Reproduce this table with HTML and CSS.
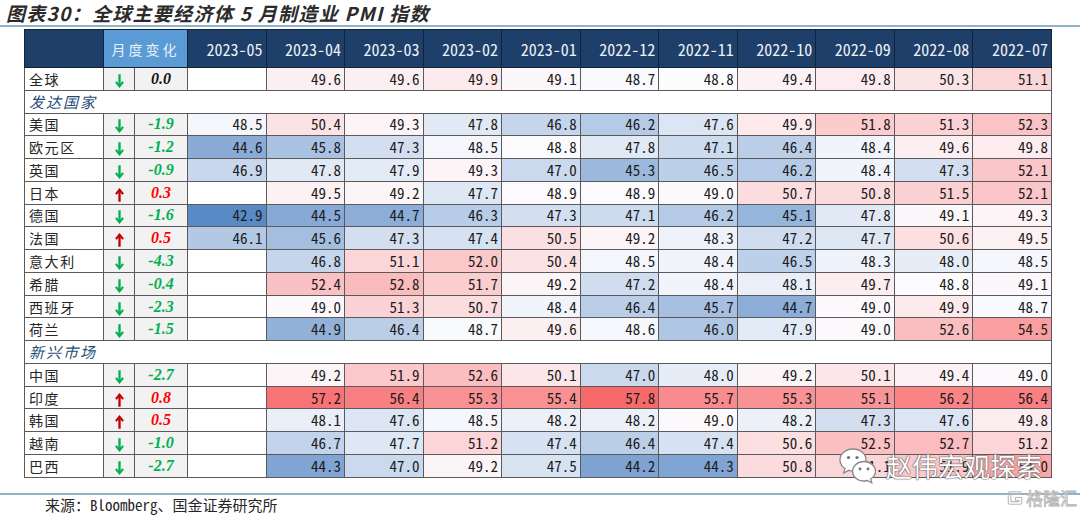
FILE: index.html
```html
<!DOCTYPE html>
<html lang="zh-CN">
<head>
<meta charset="utf-8">
<title>全球主要经济体5月制造业PMI指数</title>
<link rel="stylesheet" href="styles.css">
</head>
<body>
<svg class="defs" width="0" height="0" aria-hidden="true">
  <defs>
    <symbol id="dn" viewBox="0 0 10 15">
      <path d="M5 0 V13" stroke="currentColor" stroke-width="2.6" fill="none"/>
      <path d="M1 8.4 L5 13.4 L9 8.4" stroke="currentColor" stroke-width="2.4" fill="none" stroke-linejoin="miter"/>
    </symbol>
    <symbol id="up" viewBox="0 0 10 15">
      <path d="M5 15 V2" stroke="currentColor" stroke-width="2.6" fill="none"/>
      <path d="M1 6.6 L5 1.6 L9 6.6" stroke="currentColor" stroke-width="2.4" fill="none" stroke-linejoin="miter"/>
    </symbol>
  </defs>
</svg>
<div class="page">
  <h1 class="title">图表30：全球主要经济体 5 月制造业 PMI 指数</h1>
  <table class="pmi">
    <colgroup>
      <col class="c-name"><col class="c-arr"><col class="c-chg">
      <col span="11">
    </colgroup>
    <thead>
      <tr>
        <th class="h-blank"></th>
        <th class="h-chg" colspan="2">月度变化</th>
        <th>2023-05</th><th>2023-04</th><th>2023-03</th><th>2023-02</th><th>2023-01</th><th>2022-12</th><th>2022-11</th><th>2022-10</th><th>2022-09</th><th>2022-08</th><th>2022-07</th>
      </tr>
    </thead>
    <tbody>
      <tr><td class="name">全球</td><td class="arr dn"><svg><use href="#dn"/></svg></td><td class="chg zero">0.0</td>
        <td class="n"></td><td class="n">49.6</td><td class="n">49.6</td><td class="n">49.9</td><td class="n">49.1</td><td class="n">48.7</td><td class="n">48.8</td><td class="n">49.4</td><td class="n">49.8</td><td class="n">50.3</td><td class="n">51.1</td></tr>
      <tr class="sec"><td colspan="14">发达国家</td></tr>
      <tr><td class="name">美国</td><td class="arr dn"><svg><use href="#dn"/></svg></td><td class="chg neg">-1.9</td>
        <td class="n">48.5</td><td class="n">50.4</td><td class="n">49.3</td><td class="n">47.8</td><td class="n">46.8</td><td class="n">46.2</td><td class="n">47.6</td><td class="n">49.9</td><td class="n">51.8</td><td class="n">51.3</td><td class="n">52.3</td></tr>
      <tr><td class="name">欧元区</td><td class="arr dn"><svg><use href="#dn"/></svg></td><td class="chg neg">-1.2</td>
        <td class="n">44.6</td><td class="n">45.8</td><td class="n">47.3</td><td class="n">48.5</td><td class="n">48.8</td><td class="n">47.8</td><td class="n">47.1</td><td class="n">46.4</td><td class="n">48.4</td><td class="n">49.6</td><td class="n">49.8</td></tr>
      <tr><td class="name">英国</td><td class="arr dn"><svg><use href="#dn"/></svg></td><td class="chg neg">-0.9</td>
        <td class="n">46.9</td><td class="n">47.8</td><td class="n">47.9</td><td class="n">49.3</td><td class="n">47.0</td><td class="n">45.3</td><td class="n">46.5</td><td class="n">46.2</td><td class="n">48.4</td><td class="n">47.3</td><td class="n">52.1</td></tr>
      <tr><td class="name">日本</td><td class="arr upc"><svg><use href="#up"/></svg></td><td class="chg pos">0.3</td>
        <td class="n"></td><td class="n">49.5</td><td class="n">49.2</td><td class="n">47.7</td><td class="n">48.9</td><td class="n">48.9</td><td class="n">49.0</td><td class="n">50.7</td><td class="n">50.8</td><td class="n">51.5</td><td class="n">52.1</td></tr>
      <tr><td class="name">德国</td><td class="arr dn"><svg><use href="#dn"/></svg></td><td class="chg neg">-1.6</td>
        <td class="n">42.9</td><td class="n">44.5</td><td class="n">44.7</td><td class="n">46.3</td><td class="n">47.3</td><td class="n">47.1</td><td class="n">46.2</td><td class="n">45.1</td><td class="n">47.8</td><td class="n">49.1</td><td class="n">49.3</td></tr>
      <tr><td class="name">法国</td><td class="arr upc"><svg><use href="#up"/></svg></td><td class="chg pos">0.5</td>
        <td class="n">46.1</td><td class="n">45.6</td><td class="n">47.3</td><td class="n">47.4</td><td class="n">50.5</td><td class="n">49.2</td><td class="n">48.3</td><td class="n">47.2</td><td class="n">47.7</td><td class="n">50.6</td><td class="n">49.5</td></tr>
      <tr><td class="name">意大利</td><td class="arr dn"><svg><use href="#dn"/></svg></td><td class="chg neg">-4.3</td>
        <td class="n"></td><td class="n">46.8</td><td class="n">51.1</td><td class="n">52.0</td><td class="n">50.4</td><td class="n">48.5</td><td class="n">48.4</td><td class="n">46.5</td><td class="n">48.3</td><td class="n">48.0</td><td class="n">48.5</td></tr>
      <tr><td class="name">希腊</td><td class="arr dn"><svg><use href="#dn"/></svg></td><td class="chg neg">-0.4</td>
        <td class="n"></td><td class="n">52.4</td><td class="n">52.8</td><td class="n">51.7</td><td class="n">49.2</td><td class="n">47.2</td><td class="n">48.4</td><td class="n">48.1</td><td class="n">49.7</td><td class="n">48.8</td><td class="n">49.1</td></tr>
      <tr><td class="name">西班牙</td><td class="arr dn"><svg><use href="#dn"/></svg></td><td class="chg neg">-2.3</td>
        <td class="n"></td><td class="n">49.0</td><td class="n">51.3</td><td class="n">50.7</td><td class="n">48.4</td><td class="n">46.4</td><td class="n">45.7</td><td class="n">44.7</td><td class="n">49.0</td><td class="n">49.9</td><td class="n">48.7</td></tr>
      <tr><td class="name">荷兰</td><td class="arr dn"><svg><use href="#dn"/></svg></td><td class="chg neg">-1.5</td>
        <td class="n"></td><td class="n">44.9</td><td class="n">46.4</td><td class="n">48.7</td><td class="n">49.6</td><td class="n">48.6</td><td class="n">46.0</td><td class="n">47.9</td><td class="n">49.0</td><td class="n">52.6</td><td class="n">54.5</td></tr>
      <tr class="sec"><td colspan="14">新兴市场</td></tr>
      <tr><td class="name">中国</td><td class="arr dn"><svg><use href="#dn"/></svg></td><td class="chg neg">-2.7</td>
        <td class="n"></td><td class="n">49.2</td><td class="n">51.9</td><td class="n">52.6</td><td class="n">50.1</td><td class="n">47.0</td><td class="n">48.0</td><td class="n">49.2</td><td class="n">50.1</td><td class="n">49.4</td><td class="n">49.0</td></tr>
      <tr><td class="name">印度</td><td class="arr upc"><svg><use href="#up"/></svg></td><td class="chg pos">0.8</td>
        <td class="n"></td><td class="n">57.2</td><td class="n">56.4</td><td class="n">55.3</td><td class="n">55.4</td><td class="n">57.8</td><td class="n">55.7</td><td class="n">55.3</td><td class="n">55.1</td><td class="n">56.2</td><td class="n">56.4</td></tr>
      <tr><td class="name">韩国</td><td class="arr upc"><svg><use href="#up"/></svg></td><td class="chg pos">0.5</td>
        <td class="n"></td><td class="n">48.1</td><td class="n">47.6</td><td class="n">48.5</td><td class="n">48.2</td><td class="n">48.2</td><td class="n">49.0</td><td class="n">48.2</td><td class="n">47.3</td><td class="n">47.6</td><td class="n">49.8</td></tr>
      <tr><td class="name">越南</td><td class="arr dn"><svg><use href="#dn"/></svg></td><td class="chg neg">-1.0</td>
        <td class="n"></td><td class="n">46.7</td><td class="n">47.7</td><td class="n">51.2</td><td class="n">47.4</td><td class="n">46.4</td><td class="n">47.4</td><td class="n">50.6</td><td class="n">52.5</td><td class="n">52.7</td><td class="n">51.2</td></tr>
      <tr><td class="name">巴西</td><td class="arr dn"><svg><use href="#dn"/></svg></td><td class="chg neg">-2.7</td>
        <td class="n"></td><td class="n">44.3</td><td class="n">47.0</td><td class="n">49.2</td><td class="n">47.5</td><td class="n">44.2</td><td class="n">44.3</td><td class="n">50.8</td><td class="n">51.1</td><td class="n">51.9</td><td class="n">54.0</td></tr>
    </tbody>
  </table>
  <div class="source">来源：Bloomberg、国金证券研究所</div>

  <div class="wm">
    <svg class="wm-icon" viewBox="0 0 40 40" width="40" height="40">
      <path d="M15 3 C7.5 3 2 8 2 14 C2 17.6 4 20.6 7 22.6 L5.6 27 L10.8 24.3 C12.2 24.7 13.6 25 15 25 C22.5 25 28 20 28 14 C28 8 22.5 3 15 3 Z" fill="#fff" stroke="#8a8a8a" stroke-width="1.3"/>
      <circle cx="10.5" cy="11.5" r="1.6" fill="#6f6f6f"/>
      <circle cx="19" cy="11.5" r="1.6" fill="#6f6f6f"/>
      <path d="M26 15.5 C19.5 15.5 14.5 20 14.5 25.3 C14.5 30.6 19.5 35 26 35 C27.2 35 28.4 34.8 29.5 34.5 L33.8 37 L32.7 33 C35.6 31.2 37.5 28.4 37.5 25.3 C37.5 20 32.5 15.5 26 15.5 Z" fill="#fff" stroke="#8a8a8a" stroke-width="1.3"/>
      <circle cx="22" cy="23" r="1.4" fill="#6f6f6f"/>
      <circle cx="30" cy="23" r="1.4" fill="#6f6f6f"/>
    </svg>
    <span class="wm-text">赵伟宏观探索</span>
  </div>

  <div class="glh">
    <svg class="glh-icon" viewBox="0 0 20 20" width="18" height="18">
      <path d="M16.5 4.5 V3 H4.5 Q2.5 3 2.5 5 V15 Q2.5 17 4.5 17 H15.5 Q17.5 17 17.5 15 V9.5 H10.5 V12.5 H14.5 V14 H5.5 V6 H16.5 Z" fill="none" stroke="#b9b9b9" stroke-width="1.2" stroke-linejoin="round"/>
    </svg>
    <span class="glh-text">格隆汇</span>
  </div>
</div>
<script src="script.js"></script>
</body>
</html>
```

FILE: styles.css
```css
* { box-sizing: border-box; }

html, body {
  margin: 0;
  padding: 0;
  background: #ffffff;
}

body {
  width: 1080px;
  height: 516px;
  overflow: hidden;
  font-family: "Noto Sans CJK SC", "Noto Sans", sans-serif;
  color: #222;
}

.defs { position: absolute; width: 0; height: 0; }

.page {
  position: relative;
  width: 1080px;
  height: 516px;
}

.title {
  margin: 0;
  height: 27px;
  padding: 0 0 0 6px;
  font-size: 19px;
  line-height: 25px;
  font-weight: 700;
  font-style: italic;
  letter-spacing: 1.3px;
  color: #2b2b2b;
  border-bottom: 2px solid #8fb3c9;
}

.pmi {
  margin: 2px 0 0 24px;
  width: 1028px;
  border-collapse: collapse;
  table-layout: fixed;
}

.c-name { width: 79px; }
.c-arr { width: 31px; }
.c-chg { width: 53px; }

.pmi thead tr { height: 38px; }

.pmi th {
  background: #1f3f6b;
  color: #eef2f7;
  font-family: "Noto Sans Mono CJK SC", "Liberation Mono", monospace;
  font-weight: 400;
  font-size: 16px;
  line-height: 20px;
  text-align: right;
  padding: 0 3px 0 0;
  border: 1px solid #0f233b;
}

.pmi th.h-chg {
  background: #5b9bd5;
  text-align: center;
  font-family: "Noto Sans CJK SC", sans-serif;
  font-size: 14px;
  letter-spacing: 3px;
  color: #e9f0f8;
  padding: 0;
}

.pmi tbody tr { height: 22.78px; }

.pmi td {
  border: 1px solid #5a5a5a;
  padding: 0;
  line-height: 20px;
  white-space: nowrap;
}

.name {
  background: #fff;
  font-size: 14px;
  letter-spacing: 1.6px;
  padding-left: 4px !important;
  color: #262626;
}

.arr {
  background: #f2f2f2;
  text-align: center;
}

.arr svg {
  display: inline-block;
  width: 9px;
  height: 14px;
  vertical-align: -2px;
}

.arr.dn { color: #00b050; }
.arr.upc { color: #c00000; }

.chg {
  background: #f2f2f2;
  text-align: center;
  font-family: "Liberation Serif", "Times New Roman", serif;
  font-weight: 700;
  font-style: italic;
  font-size: 16px;
}

.chg.neg { color: #00b050; }
.chg.pos { color: #ff0000; }
.chg.zero { color: #111; }

.n {
  background: #fff;
  text-align: right;
  padding-right: 3px !important;
  font-family: "Noto Sans Mono CJK SC", "Liberation Mono", monospace;
  font-size: 15px;
  color: #1c1c1c;
}

.sec td {
  background: #fff;
  font-size: 15px;
  font-style: italic;
  letter-spacing: 2px;
  color: #1f4e79;
  padding-left: 4px;
}

.source {
  margin-top: 15px;
  border-top: 2px solid #8fb3c9;
  padding-left: 45px;
  font-family: "Noto Sans Mono CJK SC", "Noto Sans CJK SC", monospace;
  font-size: 15px;
  line-height: 20px;
  color: #262626;
}

.wm {
  position: absolute;
  left: 838px;
  top: 446px;
  display: flex;
  align-items: center;
  gap: 8px;
  white-space: nowrap;
}

.wm-icon { display: block; flex-shrink: 0; }

.wm-text {
  font-size: 26px;
  line-height: 30px;
  color: #ffffff;
  text-shadow: 0 0 1px #555, 0 0 1px #555, 0 0 2px #777;
}

.glh {
  position: absolute;
  left: 1006px;
  top: 488px;
  width: 74px;
  display: flex;
  align-items: center;
  gap: 2px;
  white-space: nowrap;
}

.glh-icon { display: block; flex-shrink: 0; }

.glh-text {
  flex-shrink: 0;
  font-size: 17px;
  line-height: 20px;
  color: #f7f7f7;
  -webkit-text-stroke: 0.8px #b5b5b5;
}
```

FILE: script.js
```js
(function () {
  var cells = Array.prototype.slice.call(document.querySelectorAll('td.n'));
  var vals = [];
  cells.forEach(function (c) {
    var v = parseFloat(c.textContent);
    if (!isNaN(v)) vals.push(v);
  });
  vals.sort(function (a, b) { return a - b; });
  var min = vals[0], max = vals[vals.length - 1];
  var p = (vals.length - 1) * 0.5;
  var lo = Math.floor(p), hi = Math.ceil(p);
  var mid = vals[lo] + (vals[hi] - vals[lo]) * (p - lo);
  var cMin = [90, 138, 198], cMid = [252, 252, 255], cMax = [248, 105, 107];
  function mix(a, b, t) {
    return a.map(function (x, i) { return Math.round(x + (b[i] - x) * t); });
  }
  cells.forEach(function (c) {
    var v = parseFloat(c.textContent);
    if (isNaN(v)) return;
    var col = v <= mid ? mix(cMin, cMid, (v - min) / (mid - min))
                       : mix(cMid, cMax, (v - mid) / (max - mid));
    c.style.backgroundColor = 'rgb(' + col.join(',') + ')';
  });
})();
```
